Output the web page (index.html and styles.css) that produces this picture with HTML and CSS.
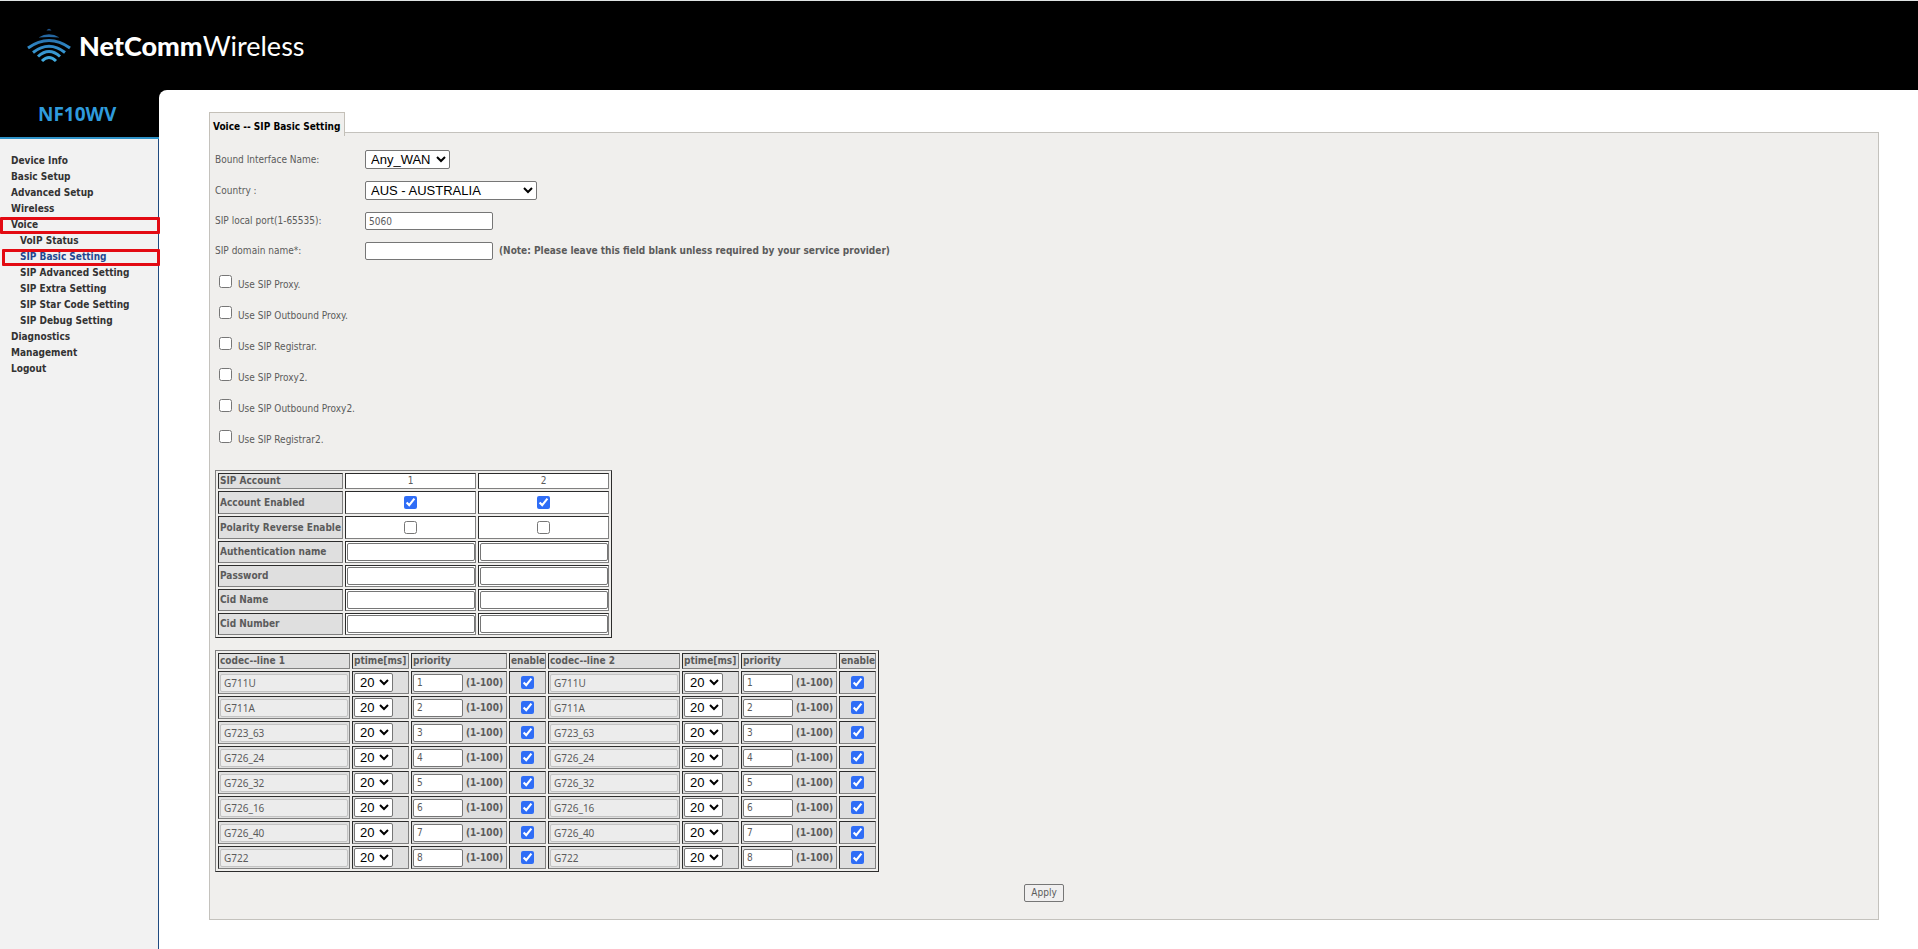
FILE: index.html
```html
<!DOCTYPE html>
<html lang="en">
<head>
<meta charset="utf-8">
<title>NetCommWireless NF10WV</title>
<link rel="stylesheet" href="styles.css">
</head>
<body>
<header class="banner">
  <svg class="logo" viewBox="0 0 44 36" width="44" height="36" aria-hidden="true">
    <defs>
      <linearGradient id="wave" x1="0" y1="0" x2="0" y2="36" gradientUnits="userSpaceOnUse">
        <stop offset="0" stop-color="#1d4f86"/>
        <stop offset="0.5" stop-color="#2f86c4"/>
        <stop offset="1" stop-color="#45b4e6"/>
      </linearGradient>
    </defs>
    <g fill="none" stroke="url(#wave)" stroke-width="3">
      <path d="M1 20Q22 5 43 20"/>
      <path d="M6 24.500Q22 12 38 24.500"/>
      <path d="M11 28.500Q22 18.500 33 28.500"/>
      <path d="M15 33Q22 26 29 33"/>
    </g>
    <path fill="url(#wave)" d="M19.500 2.500Q22 -1 24.500 2.500ZM11.500 9.500Q22 3 32.500 9.500Q22 8.500 11.500 9.500Z"/>
  </svg>
  <div class="brand"><strong>NetComm</strong>Wireless</div>
</header>
<div class="layout">
  <aside class="sidebar">
    <div class="model">NF10WV</div>
    <nav class="menu">
      <a href="#">Device Info</a>
      <a href="#">Basic Setup</a>
      <a href="#">Advanced Setup</a>
      <a href="#">Wireless</a>
      <a href="#" class="marked">Voice</a>
      <a href="#" class="sub">VoIP Status</a>
      <a href="#" class="sub marked current">SIP Basic Setting</a>
      <a href="#" class="sub">SIP Advanced Setting</a>
      <a href="#" class="sub">SIP Extra Setting</a>
      <a href="#" class="sub">SIP Star Code Setting</a>
      <a href="#" class="sub">SIP Debug Setting</a>
      <a href="#">Diagnostics</a>
      <a href="#">Management</a>
      <a href="#">Logout</a>
    </nav>
  </aside>
  <main class="content">
    <h1 class="tab">Voice -- SIP Basic Setting</h1>
    <form class="panel">
      <div class="fields">
        <div class="field"><label for="iface">Bound Interface Name:</label><select id="iface" class="iface"><option>Any_WAN</option></select></div>
        <div class="field"><label for="country">Country :</label><select id="country" class="country"><option>AUS - AUSTRALIA</option></select></div>
        <div class="field"><label for="port">SIP local port(1-65535):</label><input id="port" type="text" value="5060"></div>
        <div class="field"><label for="domain">SIP domain name*:</label><input id="domain" type="text"><strong class="note">(Note: Please leave this field blank unless required by your service provider)</strong></div>
      </div>
      <div class="options">
        <label><input type="checkbox"><span>Use SIP Proxy.</span></label>
        <label><input type="checkbox"><span>Use SIP Outbound Proxy.</span></label>
        <label><input type="checkbox"><span>Use SIP Registrar.</span></label>
        <label><input type="checkbox"><span>Use SIP Proxy2.</span></label>
        <label><input type="checkbox"><span>Use SIP Outbound Proxy2.</span></label>
        <label><input type="checkbox"><span>Use SIP Registrar2.</span></label>
      </div>
      <table class="grid accounts">
        <tr><th scope="row">SIP Account</th><td>1</td><td>2</td></tr>
        <tr class="ticks"><th scope="row">Account Enabled</th><td><input type="checkbox" aria-label="Account Enabled 1" checked></td><td><input type="checkbox" aria-label="Account Enabled 2" checked></td></tr>
        <tr class="ticks"><th scope="row">Polarity Reverse Enable</th><td><input type="checkbox" aria-label="Polarity Reverse Enable 1"></td><td><input type="checkbox" aria-label="Polarity Reverse Enable 2"></td></tr>
        <tr class="texts"><th scope="row">Authentication name</th><td><input type="text" aria-label="Authentication name 1"></td><td><input type="text" aria-label="Authentication name 2"></td></tr>
        <tr class="texts"><th scope="row">Password</th><td><input type="password" aria-label="Password 1"></td><td><input type="password" aria-label="Password 2"></td></tr>
        <tr class="texts"><th scope="row">Cid Name</th><td><input type="text" aria-label="Cid Name 1"></td><td><input type="text" aria-label="Cid Name 2"></td></tr>
        <tr class="texts"><th scope="row">Cid Number</th><td><input type="text" aria-label="Cid Number 1"></td><td><input type="text" aria-label="Cid Number 2"></td></tr>
      </table>
      <table class="grid codecs">
        <colgroup><col class="c-name"><col class="c-ptime"><col class="c-prio"><col class="c-on"><col class="c-name"><col class="c-ptime"><col class="c-prio"><col class="c-on"></colgroup>
        <tr><th>codec--line 1</th><th>ptime[ms]</th><th>priority</th><th>enable</th><th>codec--line 2</th><th>ptime[ms]</th><th>priority</th><th>enable</th></tr>
        <tr class="ticks">
          <td><input type="text" aria-label="codec" value="G711U" disabled></td><td><select aria-label="ptime"><option>20</option></select></td><td><label class="prio"><input type="text" value="1">(1-100)</label></td><td class="on"><input type="checkbox" aria-label="enable" checked></td>
          <td><input type="text" aria-label="codec" value="G711U" disabled></td><td><select aria-label="ptime"><option>20</option></select></td><td><label class="prio"><input type="text" value="1">(1-100)</label></td><td class="on"><input type="checkbox" aria-label="enable" checked></td>
        </tr>
        <tr class="ticks">
          <td><input type="text" aria-label="codec" value="G711A" disabled></td><td><select aria-label="ptime"><option>20</option></select></td><td><label class="prio"><input type="text" value="2">(1-100)</label></td><td class="on"><input type="checkbox" aria-label="enable" checked></td>
          <td><input type="text" aria-label="codec" value="G711A" disabled></td><td><select aria-label="ptime"><option>20</option></select></td><td><label class="prio"><input type="text" value="2">(1-100)</label></td><td class="on"><input type="checkbox" aria-label="enable" checked></td>
        </tr>
        <tr class="ticks">
          <td><input type="text" aria-label="codec" value="G723_63" disabled></td><td><select aria-label="ptime"><option>20</option></select></td><td><label class="prio"><input type="text" value="3">(1-100)</label></td><td class="on"><input type="checkbox" aria-label="enable" checked></td>
          <td><input type="text" aria-label="codec" value="G723_63" disabled></td><td><select aria-label="ptime"><option>20</option></select></td><td><label class="prio"><input type="text" value="3">(1-100)</label></td><td class="on"><input type="checkbox" aria-label="enable" checked></td>
        </tr>
        <tr class="ticks">
          <td><input type="text" aria-label="codec" value="G726_24" disabled></td><td><select aria-label="ptime"><option>20</option></select></td><td><label class="prio"><input type="text" value="4">(1-100)</label></td><td class="on"><input type="checkbox" aria-label="enable" checked></td>
          <td><input type="text" aria-label="codec" value="G726_24" disabled></td><td><select aria-label="ptime"><option>20</option></select></td><td><label class="prio"><input type="text" value="4">(1-100)</label></td><td class="on"><input type="checkbox" aria-label="enable" checked></td>
        </tr>
        <tr class="ticks">
          <td><input type="text" aria-label="codec" value="G726_32" disabled></td><td><select aria-label="ptime"><option>20</option></select></td><td><label class="prio"><input type="text" value="5">(1-100)</label></td><td class="on"><input type="checkbox" aria-label="enable" checked></td>
          <td><input type="text" aria-label="codec" value="G726_32" disabled></td><td><select aria-label="ptime"><option>20</option></select></td><td><label class="prio"><input type="text" value="5">(1-100)</label></td><td class="on"><input type="checkbox" aria-label="enable" checked></td>
        </tr>
        <tr class="ticks">
          <td><input type="text" aria-label="codec" value="G726_16" disabled></td><td><select aria-label="ptime"><option>20</option></select></td><td><label class="prio"><input type="text" value="6">(1-100)</label></td><td class="on"><input type="checkbox" aria-label="enable" checked></td>
          <td><input type="text" aria-label="codec" value="G726_16" disabled></td><td><select aria-label="ptime"><option>20</option></select></td><td><label class="prio"><input type="text" value="6">(1-100)</label></td><td class="on"><input type="checkbox" aria-label="enable" checked></td>
        </tr>
        <tr class="ticks">
          <td><input type="text" aria-label="codec" value="G726_40" disabled></td><td><select aria-label="ptime"><option>20</option></select></td><td><label class="prio"><input type="text" value="7">(1-100)</label></td><td class="on"><input type="checkbox" aria-label="enable" checked></td>
          <td><input type="text" aria-label="codec" value="G726_40" disabled></td><td><select aria-label="ptime"><option>20</option></select></td><td><label class="prio"><input type="text" value="7">(1-100)</label></td><td class="on"><input type="checkbox" aria-label="enable" checked></td>
        </tr>
        <tr class="ticks">
          <td><input type="text" aria-label="codec" value="G722" disabled></td><td><select aria-label="ptime"><option>20</option></select></td><td><label class="prio"><input type="text" value="8">(1-100)</label></td><td class="on"><input type="checkbox" aria-label="enable" checked></td>
          <td><input type="text" aria-label="codec" value="G722" disabled></td><td><select aria-label="ptime"><option>20</option></select></td><td><label class="prio"><input type="text" value="8">(1-100)</label></td><td class="on"><input type="checkbox" aria-label="enable" checked></td>
        </tr>
      </table>
      <button type="button" class="apply">Apply</button>
    </form>
  </main>
</div>
</body>
</html>
```

FILE: styles.css
```css
* { box-sizing: border-box; }

body {
  margin: 0;
  min-height: 100vh;
  display: flex;
  flex-direction: column;
  background: #000;
  color: #5b5b5b;
  font: 10px/16px "DejaVu Sans Condensed", "DejaVu Sans", sans-serif;
}

.banner {
  display: flex;
  align-items: center;
  gap: 8px;
  height: 90px;
  padding-left: 27px;
  border-top: 1px solid #dfe3e3;
}

.brand {
  color: #fff;
  font: 27px/32px Lato, sans-serif;
}

.brand strong { font-weight: 900; }

.layout {
  display: flex;
  flex: 1;
}

.sidebar {
  display: flex;
  flex-direction: column;
  width: 159px;
  flex: none;
}

.model {
  padding: 10px 0 9px 38px;
  border-bottom: 2px solid #2f93c8;
  color: #2f9bdc;
  font: bold 19px/28px "Open Sans", sans-serif;
}

.menu {
  flex: 1;
  padding-top: 14px;
  border-right: 1px solid #1f4a80;
  background: #f2f2f2;
}

.menu a {
  display: block;
  position: relative;
  padding-left: 11px;
  color: #333;
  font-weight: bold;
  text-decoration: none;
}

.menu .sub { padding-left: 20px; }
.menu .current { color: #24468f; }

.marked::after {
  content: "";
  position: absolute;
  inset: 0 -2px -1px 0;
  border: 3px solid #e30b13;
  border-radius: 1px;
}

.marked.current::after { left: 2px; }

.content {
  flex: 1;
  min-width: 0;
  padding: 22px 39px 29px 50px;
  border-top-left-radius: 8px;
  background: #fff;
}

.tab {
  position: relative;
  width: fit-content;
  margin: 0 0 -4px;
  padding: 6px 4px 1px 3px;
  border: 1px solid #c4c0b8;
  border-bottom: 0;
  background: #f0efed;
  color: #000;
  font-size: 10px;
  line-height: 16px;
}

.panel {
  padding: 17px 5px;
  border: 1px solid #c4c2bd;
  background: #f0efed;
}

input, select, button {
  margin: 0;
  border: 1px solid #767676;
  border-radius: 2px;
  background: #fff;
}

input[type="text"], input[type="password"] {
  display: block;
  width: 128px;
  height: 18px;
  padding: 0 3px;
  color: #5b5b5b;
  font: inherit;
  line-height: 16px;
  font-weight: normal;
}

input[type="text"]:disabled {
  border-color: #c3c3c3;
  background: #ececec;
  font-family: "Noto Sans", sans-serif;
}

input[type="checkbox"] {
  width: 13px;
  height: 13px;
  accent-color: #2f6df6;
}

select {
  display: block;
  width: 39px;
  height: 19px;
  padding: 0 0 0 1px;
  color: #000;
  font: 13px/16px "Liberation Sans", sans-serif;
}

.iface { width: 85px; }
.country { width: 172px; }

.fields, .options {
  display: grid;
  gap: 12px;
}

.field {
  display: flex;
  align-items: center;
}

.field label { width: 150px; }
.note { padding-left: 6px; }

.options {
  padding: 15px 0 21px 4px;
}

.options label {
  display: flex;
  gap: 6px;
  height: 19px;
  width: fit-content;
}

.options span { padding-top: 2px; }

.grid {
  border: 1px outset #808080;
  border-spacing: 2px;
}

.grid th, .grid td {
  height: 16px;
  padding: 0 1px;
  border: 1px inset #808080;
  line-height: 14px;
  text-align: left;
}

.grid th { background: #dfdfdf; }

.grid .ticks > * { height: 23px; }
.grid .texts > * { height: 22px; }
.grid input[type="checkbox"] { display: block; margin: 0 auto; }

.accounts {
  table-layout: fixed;
  width: 397px;
}

.accounts td {
  width: 131px;
  padding: 0;
  background: #fff;
  text-align: center;
}

.accounts th {
  width: 125px;
  padding-right: 0;
  white-space: nowrap;
}

.accounts input[type="text"], .accounts input[type="password"] { margin: 0 auto; }

.codecs {
  table-layout: fixed;
  width: 664px;
  margin-top: 12px;
}

.codecs td { background: #dfdfdf; }
.c-name { width: 132px; }
.c-ptime { width: 57px; }
.c-prio { width: 96px; }
.c-on { width: 37px; }

.prio {
  display: flex;
  align-items: center;
  gap: 3px;
  font-weight: bold;
}

.prio input[type="text"] { width: 50px; }

.apply {
  display: block;
  width: 40px;
  height: 18px;
  margin: 12px auto 0;
  padding: 0;
  background: #f0efef;
  color: #5b5b5b;
  font: inherit;
}
```
